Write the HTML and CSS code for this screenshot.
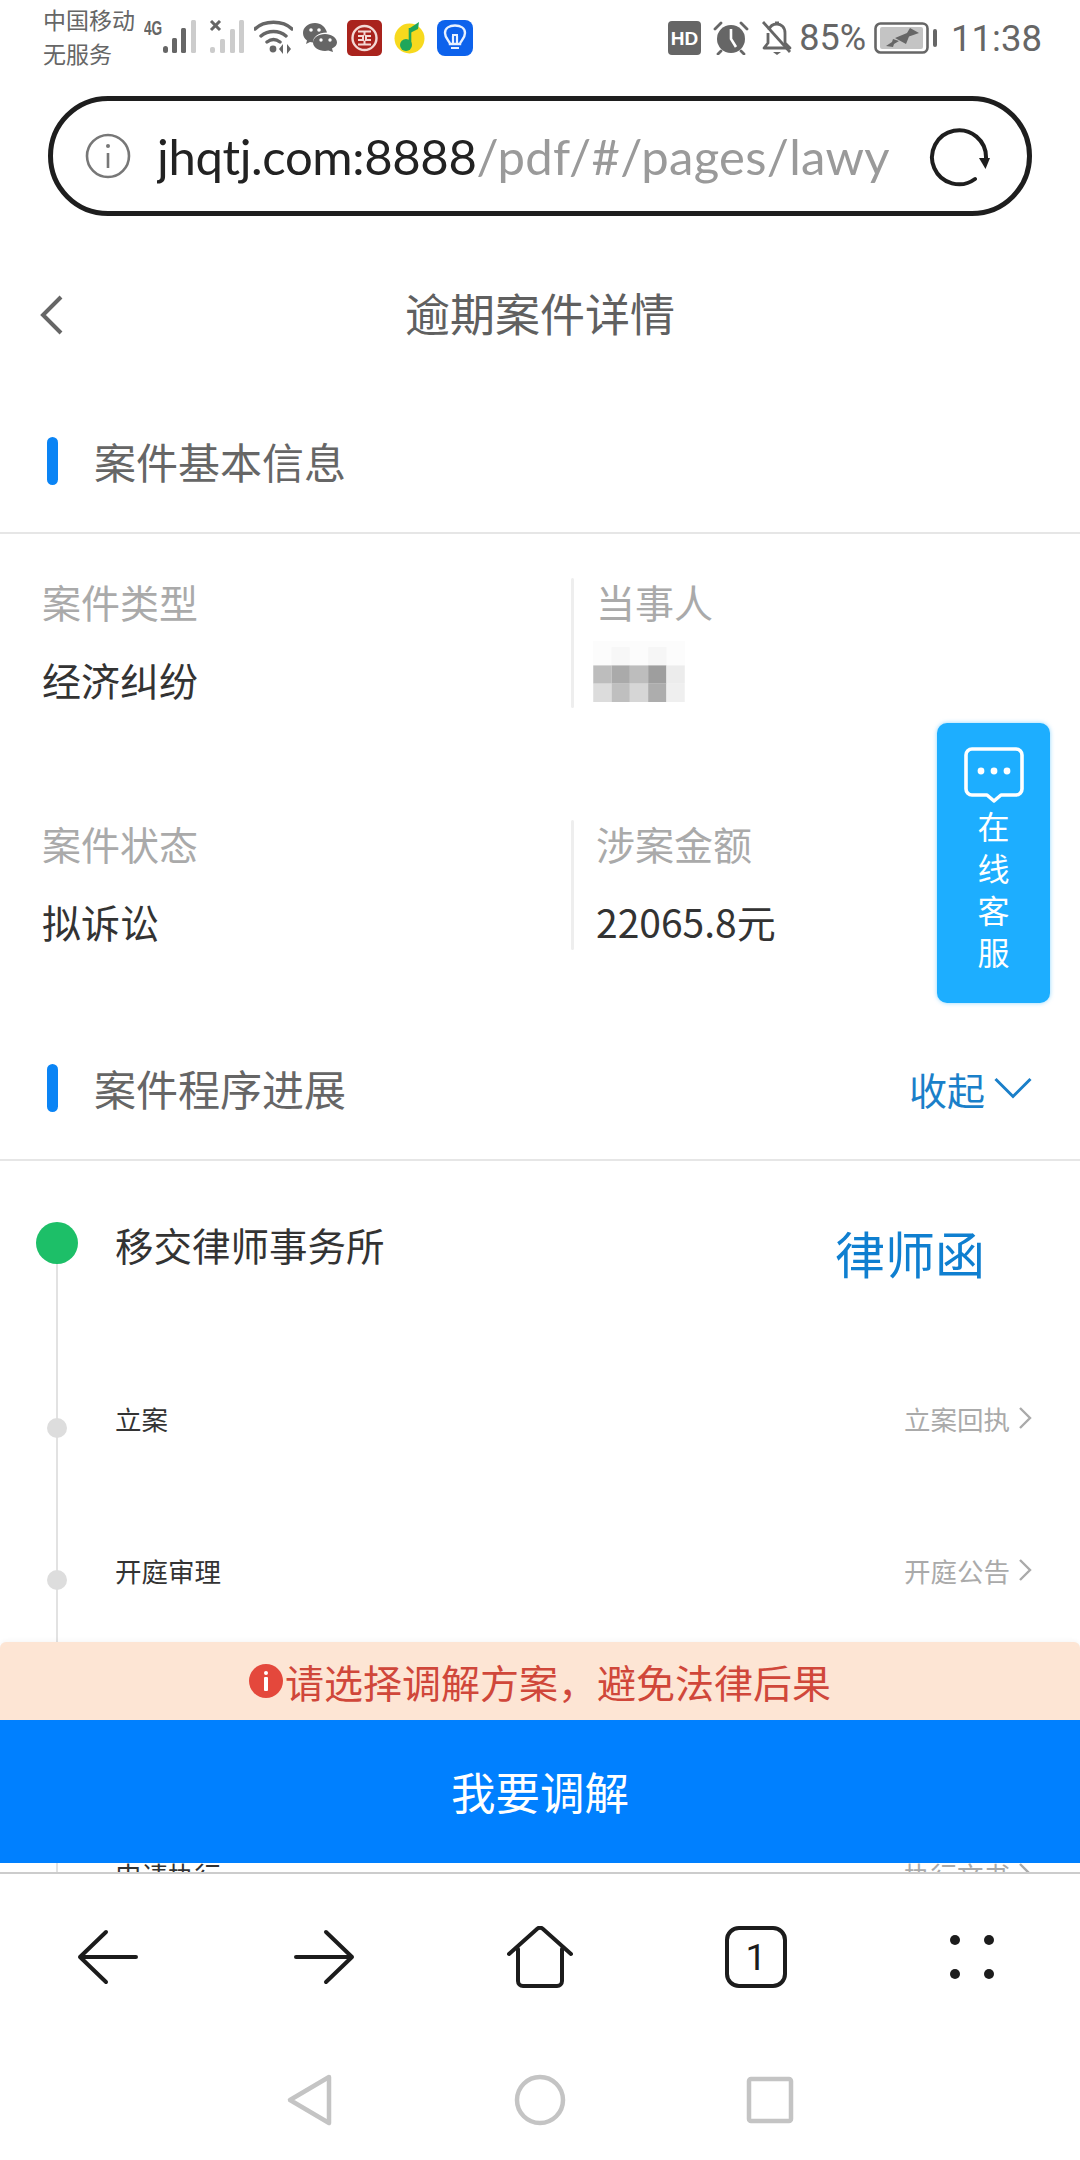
FILE: index.html
```html
<!DOCTYPE html>
<html lang="zh-CN">
<head>
    <meta charset="UTF-8">
    <meta name="viewport" content="width=device-width, initial-scale=1.0">
    <title>逾期案件详情</title>
    <link rel="stylesheet" href="styles.css">
</head>
<body>
    <div class="status-bar">
        <div class="carrier">中国移动<br>无服务</div>
        <span class="net-type">4G</span>
        <svg class="signal" width="35" height="34" viewBox="0 0 35 34">
            <rect x="1" y="26" width="5" height="7" rx="2.5" fill="#666"/>
            <rect x="10" y="18" width="5" height="15" rx="1.5" fill="#666"/>
            <rect x="19" y="8" width="5" height="25" rx="1.5" fill="#666"/>
            <rect x="29" y="0" width="5" height="33" rx="1.5" fill="#ccc"/>
        </svg>
        <svg class="signal-off" width="36" height="34" viewBox="0 0 36 34">
            <path d="M2 1l9 9M11 1l-9 9" stroke="#666" stroke-width="3"/>
            <rect x="1" y="27" width="5" height="6" rx="2" fill="#ccc"/>
            <rect x="11" y="19" width="5" height="14" rx="1.5" fill="#ccc"/>
            <rect x="21" y="9" width="5" height="24" rx="1.5" fill="#ccc"/>
            <rect x="30" y="0" width="5" height="33" rx="1.5" fill="#ccc"/>
        </svg>
        <svg class="wifi" width="39" height="34" viewBox="0 0 39 34">
            <path d="M1 9C10 0 29 0 38 9M7 16c7-6 18-6 25 0M13 22c4-3 9-3 13 0" fill="none" stroke="#666" stroke-width="3.4" stroke-linecap="round"/>
            <circle cx="19" cy="29" r="3.4" fill="#666"/>
            <path d="M29 24l-4 5 4 5zM33 24l4 5-4 5z" fill="#666"/>
        </svg>
        <svg class="wechat" width="34" height="29" viewBox="0 0 34 29">
            <path d="M12 0C5 0 0 4.500 0 10c0 3 1.500 5.500 4 7.500L3 21l4-2c1 .3 2 .5 3 .5C10 14 15 9.500 24 9.500 22.500 4 18 0 12 0z" fill="#666"/>
            <path d="M22 11c-6.500 0-12 3.800-12 8.500S15.500 28 22 28c1.200 0 2.300-.2 3.300-.5L30 29l-1-3.500c3-1.500 5-3.500 5-6 0-4.700-5.500-8.500-12-8.500z" fill="#666"/>
            <circle cx="8" cy="7" r="1.800" fill="#fff"/>
            <circle cx="16" cy="7" r="1.800" fill="#fff"/>
            <circle cx="18" cy="17" r="1.700" fill="#fff"/>
            <circle cx="27" cy="17" r="1.700" fill="#fff"/>
        </svg>
        <svg class="app-bank" width="35" height="36" viewBox="0 0 35 36">
            <rect width="35" height="36" rx="5" fill="#a9231d"/>
            <circle cx="17.500" cy="18" r="12" fill="none" stroke="#f3d9d5" stroke-width="2.400"/>
            <path d="M11 11.500h13M11 24.500h13M11 16h5v4h-5M24 16h-5v4h5M17.500 11.500v4M17.500 20.500v4" fill="none" stroke="#f3d9d5" stroke-width="2"/>
        </svg>
        <svg class="app-music" width="31" height="32" viewBox="0 0 31 32">
            <circle cx="15.500" cy="16.500" r="15" fill="#f7d91e"/>
            <path d="M16 6v17" stroke="#1fa65a" stroke-width="2.600"/>
            <circle cx="12" cy="23" r="6" fill="#1fa65a"/>
            <path d="M16 6l9-6-1 7-8 4z" fill="#1fa65a"/>
        </svg>
        <svg class="app-tips" width="36" height="36" viewBox="0 0 36 36">
            <rect width="36" height="36" rx="8" fill="#0d62ec"/>
            <path d="M13 24c0-3-5-5-5-11 0-5 4.500-7.500 10-7.500S28 8 28 13c0 6-5 8-5 11z" fill="none" stroke="#e8f1ff" stroke-width="2.400"/>
            <path d="M14 28h8M16 16v8M20 16v8M15 15h6" fill="none" stroke="#e8f1ff" stroke-width="2.200"/>
        </svg>
        <div class="status-right">
            <svg class="hd" width="33" height="34" viewBox="0 0 33 34">
                <rect width="33" height="34" rx="4" fill="#666"/>
                <text x="16.500" y="23.500" text-anchor="middle" class="hd-text">HD</text>
            </svg>
            <svg class="alarm" width="36" height="34" viewBox="0 0 36 34">
                <circle cx="18" cy="18" r="14" fill="#666"/>
                <path d="M18 8v10l5 8" fill="none" stroke="#fff" stroke-width="2.600"/>
                <path d="M2 8l6-6M34 8l-6-6M8 30l-3 3M28 30l3 3" stroke="#666" stroke-width="2.800" stroke-linecap="round"/>
            </svg>
            <svg class="bell-off" width="30" height="36" viewBox="0 0 30 36">
                <path d="M7 10c1-4 4-6 8-6s8 3 8 9v10l5 5H2l4-5V13" fill="none" stroke="#666" stroke-width="2.800" stroke-linejoin="round"/>
                <path d="M1 2l27 30" stroke="#666" stroke-width="2.800"/>
                <path d="M11 32h8l-4 3z" fill="#666"/>
                <path d="M13 3h4" stroke="#666" stroke-width="3"/>
            </svg>
            <span class="battery-pct">85%</span>
            <svg class="battery" width="63" height="32" viewBox="0 0 63 32">
                <rect x="1.500" y="1.500" width="52" height="29" rx="5" fill="none" stroke="#666" stroke-width="2.600"/>
                <rect x="6" y="5" width="43" height="22" rx="2" fill="#c4c4c4"/>
                <path d="M21 16L33 11 36 6 45 11 35 14.500 32 22zM12 24L18 20 19 17 25 19 20 22 19 25z" fill="#666"/>
                <rect x="59" y="7" width="4" height="18" rx="2" fill="#666"/>
            </svg>
            <span class="clock">11:38</span>
        </div>
    </div>

    <div class="url-bar">
        <svg class="url-info" width="46" height="46" viewBox="0 0 46 46">
            <circle cx="23" cy="23" r="21" fill="none" stroke="#777" stroke-width="2.600"/>
            <path d="M23 20v15" stroke="#777" stroke-width="2.600"/>
            <circle cx="23" cy="13" r="2" fill="#777"/>
        </svg>
        <div class="url-text"><span class="url-host">jhqtj.com:8888</span>/pdf/#/pages/lawy</div>
        <svg class="url-reload" width="62" height="62" viewBox="0 0 62 62">
            <path d="M46 52A27 27 0 1 1 57 31" fill="none" stroke="#1e1e1e" stroke-width="4" stroke-linecap="round"/>
            <path d="M50 31h11l-4.500 11z" fill="#1e1e1e"/>
        </svg>
    </div>

    <div class="webview">
        <div class="title-bar">
            <svg class="back" width="24" height="42" viewBox="0 0 24 42">
                <path d="M21 3L3 21l18 18" fill="none" stroke="#666" stroke-width="4"/>
            </svg>
            <h1>逾期案件详情</h1>
        </div>

        <div class="section-head">
            <span class="section-mark"></span>
            <h2>案件基本信息</h2>
        </div>

        <div class="info-grid">
            <div class="info-cell">
                <div class="info-label">案件类型</div>
                <div class="info-value">经济纠纷</div>
            </div>
            <div class="info-cell info-cell-right">
                <div class="info-label">当事人</div>
                <svg class="mosaic" width="92" height="61" viewBox="0 0 90 60">
                    <rect x="0" y="0" width="90" height="24" fill="#fcfcfc"/>
                    <rect x="18" y="6" width="18" height="18" fill="#f7f7f7"/>
                    <rect x="54" y="6" width="18" height="18" fill="#f6f6f6"/>
                    <rect x="0" y="24" width="18" height="18" fill="#bdbdbd"/>
                    <rect x="18" y="24" width="18" height="18" fill="#aaa"/>
                    <rect x="36" y="24" width="18" height="18" fill="#bdbdbd"/>
                    <rect x="54" y="24" width="18" height="18" fill="#9e9e9e"/>
                    <rect x="72" y="24" width="18" height="18" fill="#ececec"/>
                    <rect x="0" y="42" width="18" height="18" fill="#dcdcdc"/>
                    <rect x="18" y="42" width="18" height="18" fill="#bfbfbf"/>
                    <rect x="36" y="42" width="18" height="18" fill="#d6d6d6"/>
                    <rect x="54" y="42" width="18" height="18" fill="#adadad"/>
                    <rect x="72" y="42" width="18" height="18" fill="#efefef"/>
                </svg>
            </div>
            <div class="info-cell">
                <div class="info-label">案件状态</div>
                <div class="info-value">拟诉讼</div>
            </div>
            <div class="info-cell info-cell-right">
                <div class="info-label">涉案金额</div>
                <div class="info-value">22065.8元</div>
            </div>
        </div>

        <div class="section-head">
            <span class="section-mark"></span>
            <h2>案件程序进展</h2>
            <a class="collapse">收起
                <svg width="38" height="22" viewBox="0 0 38 22">
                    <path d="M1.500 2L19 19.500 36.500 2" fill="none" stroke="#1a7fc9" stroke-width="3"/>
                </svg>
            </a>
        </div>

        <div class="timeline">
            <div class="step step-current">
                <span class="dot-big"></span>
                <div class="step-title">移交律师事务所</div>
                <a class="lawyer-letter">律师函</a>
            </div>
            <div class="step">
                <span class="dot"></span>
                <div class="step-name">立案</div>
                <a class="step-link">立案回执
                    <svg width="14" height="24" viewBox="0 0 14 24"><path d="M2 2l10 10L2 22" fill="none" stroke="#aaa" stroke-width="2.400"/></svg>
                </a>
            </div>
            <div class="step">
                <span class="dot"></span>
                <div class="step-name">开庭审理</div>
                <a class="step-link">开庭公告
                    <svg width="14" height="24" viewBox="0 0 14 24"><path d="M2 2l10 10L2 22" fill="none" stroke="#aaa" stroke-width="2.400"/></svg>
                </a>
            </div>
            <div class="step">
                <span class="dot"></span>
            </div>
            <div class="step">
                <span class="dot"></span>
                <div class="step-name">申请执行</div>
                <a class="step-link">执行文书
                    <svg width="14" height="24" viewBox="0 0 14 24"><path d="M2 2l10 10L2 22" fill="none" stroke="#aaa" stroke-width="2.400"/></svg>
                </a>
            </div>
        </div>

        <div class="float-service">
            <svg width="60" height="56" viewBox="0 0 60 56">
                <path d="M8 2h44a6 6 0 0 1 6 6v34a6 6 0 0 1-6 6H37l-7 6-7-6H8a6 6 0 0 1-6-6V8a6 6 0 0 1 6-6z" fill="none" stroke="#fff" stroke-width="3.600" stroke-linejoin="round"/>
                <circle cx="17" cy="24" r="3.400" fill="#fff"/>
                <circle cx="30" cy="24" r="3.400" fill="#fff"/>
                <circle cx="43" cy="24" r="3.400" fill="#fff"/>
            </svg>
            <div class="float-text">在线客服</div>
        </div>

        <div class="action-bar">
            <div class="notice">
                <svg width="34" height="34" viewBox="0 0 34 34">
                    <circle cx="17" cy="17" r="17" fill="#e4483c"/>
                    <rect x="15" y="7" width="4" height="4" rx="2" fill="#fff"/>
                    <rect x="15" y="13" width="4" height="14" rx="1" fill="#fff"/>
                </svg>
                <span>请选择调解方案，避免法律后果</span>
            </div>
            <button class="mediate-btn">我要调解</button>
        </div>
    </div>

    <div class="browser-nav">
        <svg width="64" height="56" viewBox="0 0 64 56">
            <path d="M30 3L4 28l26 25M4 28h56" fill="none" stroke="#1c1c1c" stroke-width="4" stroke-linecap="round" stroke-linejoin="round"/>
        </svg>
        <svg width="64" height="56" viewBox="0 0 64 56">
            <path d="M34 3l26 25-26 25M60 28H4" fill="none" stroke="#1c1c1c" stroke-width="4" stroke-linecap="round" stroke-linejoin="round"/>
        </svg>
        <svg width="66" height="62" viewBox="0 0 66 62">
            <path d="M2 28L30 3a4 4 0 0 1 6 0l28 25M11 23v32a5 5 0 0 0 5 5h34a5 5 0 0 0 5-5V23" fill="none" stroke="#1c1c1c" stroke-width="4" stroke-linecap="round" stroke-linejoin="round"/>
        </svg>
        <div class="tab-count">1</div>
        <svg class="nav-more" width="50" height="46" viewBox="0 0 50 46">
            <circle cx="8" cy="6" r="5" fill="#1c1c1c"/>
            <circle cx="42" cy="6" r="5" fill="#1c1c1c"/>
            <circle cx="8" cy="40" r="5" fill="#1c1c1c"/>
            <circle cx="42" cy="40" r="5" fill="#1c1c1c"/>
        </svg>
    </div>

    <div class="system-nav">
        <svg width="60" height="56" viewBox="0 0 60 56">
            <path d="M49 5L10 28l39 23z" fill="none" stroke="#c4c4c4" stroke-width="4.500" stroke-linejoin="round"/>
        </svg>
        <svg width="60" height="56" viewBox="0 0 60 56">
            <circle cx="30" cy="28" r="23" fill="none" stroke="#c4c4c4" stroke-width="4.500"/>
        </svg>
        <svg width="60" height="56" viewBox="0 0 60 56">
            <rect x="9" y="7" width="42" height="42" rx="2" fill="none" stroke="#c4c4c4" stroke-width="4.500"/>
        </svg>
    </div>
</body>
</html>
```

FILE: styles.css
```css
* {
    box-sizing: border-box;
}

body {
    margin: 0;
    width: 1080px;
    height: 2160px;
    overflow: hidden;
    background: #fff;
    font-family: "Noto Sans CJK SC", Roboto, sans-serif;
    color: #333;
}

svg {
    display: block;
    flex: none;
}

/* phone status bar */
.status-bar {
    display: flex;
    align-items: flex-start;
    height: 96px;
    padding: 20px 38px 0 43px;
    color: #666;
}

.carrier {
    margin-top: -18px;
    font-size: 23px;
    line-height: 34px;
}

.net-type {
    width: 18px;
    margin-left: 9px;
    font-family: "Liberation Sans", sans-serif;
    font-size: 21px;
    font-weight: 700;
    line-height: 16px;
    transform: scaleX(0.65);
    transform-origin: left center;
}

.signal-off {
    margin-left: 12px;
}

.wifi {
    margin-left: 9px;
}

.wechat {
    margin: 3px 0 0 10px;
}

.app-bank {
    margin-left: 10px;
}

.app-music {
    margin: 2px 0 0 12px;
}

.app-tips {
    margin-left: 12px;
}

.status-right {
    display: flex;
    align-items: center;
    margin-left: auto;
    height: 36px;
}

.hd-text {
    font-family: "Liberation Sans", sans-serif;
    font-size: 19px;
    font-weight: 700;
    fill: #fff;
}

.alarm {
    margin-left: 12px;
}

.bell-off {
    margin-left: 13px;
}

.battery-pct {
    margin-left: 7px;
    font-family: Roboto, sans-serif;
    font-size: 36px;
}

.battery {
    margin-left: 8px;
}

.clock {
    margin-left: 14px;
    font-family: Roboto, sans-serif;
    font-size: 36.500px;
}

/* browser address bar */
.url-bar {
    display: flex;
    align-items: center;
    height: 120px;
    margin: 0 48px;
    padding: 0 36px 0 32px;
    border: 5px solid #1e1e1e;
    border-radius: 60px;
}

.url-text {
    flex: 1;
    margin-left: 26px;
    overflow: hidden;
    white-space: nowrap;
    font-family: Lato, sans-serif;
    font-size: 49px;
    letter-spacing: 0.3px;
    color: #9a9a9a;
}

.url-host {
    letter-spacing: -0.350px;
    color: #222;
}

.url-reload {
    margin-top: 4px;
}

/* page inside the browser */
.webview {
    position: relative;
    height: 1656px;
    overflow: hidden;
}

.title-bar {
    display: grid;
    grid-template-columns: 1fr auto 1fr;
    align-items: center;
    height: 192px;
    padding-left: 40px;
}

.title-bar h1 {
    grid-column: 2;
    grid-row: 1;
    margin: 0 0 0 -40px;
    font-size: 45px;
    font-weight: 400;
    color: #606060;
}

.back {
    grid-column: 1;
    grid-row: 1;
    margin-top: 5px;
}

.section-head {
    display: flex;
    align-items: center;
    height: 126px;
    padding: 0 48px 18px 47px;
    border-bottom: 2px solid #e6e6e6;
}

.section-mark {
    width: 11px;
    height: 48px;
    border-radius: 6px;
    background: #0a84f5;
}

.section-head h2 {
    margin: 0 0 2px 36px;
    font-size: 42px;
    font-weight: 400;
    color: #666;
}

.collapse {
    display: flex;
    align-items: center;
    gap: 9px;
    margin-left: auto;
    font-size: 38px;
    color: #1a7fc9;
}

.info-grid {
    display: grid;
    grid-template-columns: 529px 1fr;
    grid-auto-rows: 242px;
    margin-bottom: 17px;
    padding-left: 42px;
}

.info-cell {
    padding-top: 41px;
}

.info-cell-right {
    position: relative;
}

.info-cell-right::before {
    content: "";
    position: absolute;
    left: 0;
    top: 44px;
    width: 3px;
    height: 130px;
    border-radius: 2px;
    background: #eee;
}

.info-cell-right .info-label,
.info-cell-right .info-value {
    margin-left: 25px;
}

.info-label {
    font-size: 39px;
    line-height: 52px;
    color: #aaa;
}

.info-value {
    margin-top: 26px;
    font-size: 39px;
    line-height: 52px;
    color: #333;
}

.mosaic {
    margin: 14px 0 0 22px;
}

/* case progress timeline */
.timeline {
    background: linear-gradient(#e2e2e2, #e2e2e2) 56px 82px / 2px 100% no-repeat;
}

.step {
    display: grid;
    grid-template-columns: 115px 1fr auto;
    align-items: center;
    height: 152px;
    padding: 0 48px 4px 0;
}

.step-current {
    align-items: start;
    height: 183px;
    padding: 57px 95px 0 0;
}

.dot-big {
    width: 42px;
    height: 42px;
    margin: 4px 0 0 36px;
    border-radius: 50%;
    background: #1dbf68;
}

.dot {
    width: 20px;
    height: 20px;
    margin: 20px 0 0 47px;
    border-radius: 50%;
    background: #ddd;
}

.step-title {
    font-size: 38.500px;
    line-height: 52px;
    color: #333;
}

.lawyer-letter {
    font-size: 50px;
    line-height: 68px;
    color: #0f7fd0;
}

.step-name {
    font-size: 26.500px;
    color: #333;
}

.step-link {
    display: flex;
    align-items: center;
    gap: 8px;
    font-size: 26.500px;
    color: #aaa;
}

/* floating customer service button */
.float-service {
    position: absolute;
    top: 507px;
    left: 937px;
    display: flex;
    flex-direction: column;
    align-items: center;
    width: 113px;
    height: 280px;
    padding-top: 24px;
    border-radius: 10px;
    background: #1daeff;
    box-shadow: 0 0 4px rgba(29, 174, 255, 0.5);
}

.float-text {
    width: 32px;
    margin-top: 1px;
    font-size: 32px;
    line-height: 42px;
    color: #fff;
}

/* fixed bottom action area */
.action-bar {
    position: absolute;
    left: 0;
    right: 0;
    bottom: 9px;
}

.notice {
    display: flex;
    align-items: center;
    justify-content: center;
    gap: 2px;
    height: 78px;
    border-radius: 6px 6px 0 0;
    background: #fde5d4;
    box-shadow: 0 -2px 4px rgba(0, 0, 0, 0.03);
    font-size: 39px;
    color: #d0473a;
}

.mediate-btn {
    display: block;
    width: 100%;
    height: 143px;
    padding-bottom: 3px;
    border: none;
    background: #0080ff;
    font-family: inherit;
    font-size: 44.500px;
    color: #fff;
}

/* browser toolbar and android nav */
.browser-nav {
    display: grid;
    grid-template-columns: repeat(5, 216px);
    justify-items: center;
    align-items: center;
    height: 168px;
    border-top: 2px solid #ccc;
}

.tab-count {
    display: flex;
    align-items: center;
    justify-content: center;
    width: 62px;
    height: 62px;
    border: 4px solid #1c1c1c;
    border-radius: 14px;
    font-family: Roboto, sans-serif;
    font-size: 37px;
    color: #1c1c1c;
}

.system-nav {
    display: flex;
    justify-content: center;
    align-items: center;
    gap: 170px;
    height: 120px;
}
```
